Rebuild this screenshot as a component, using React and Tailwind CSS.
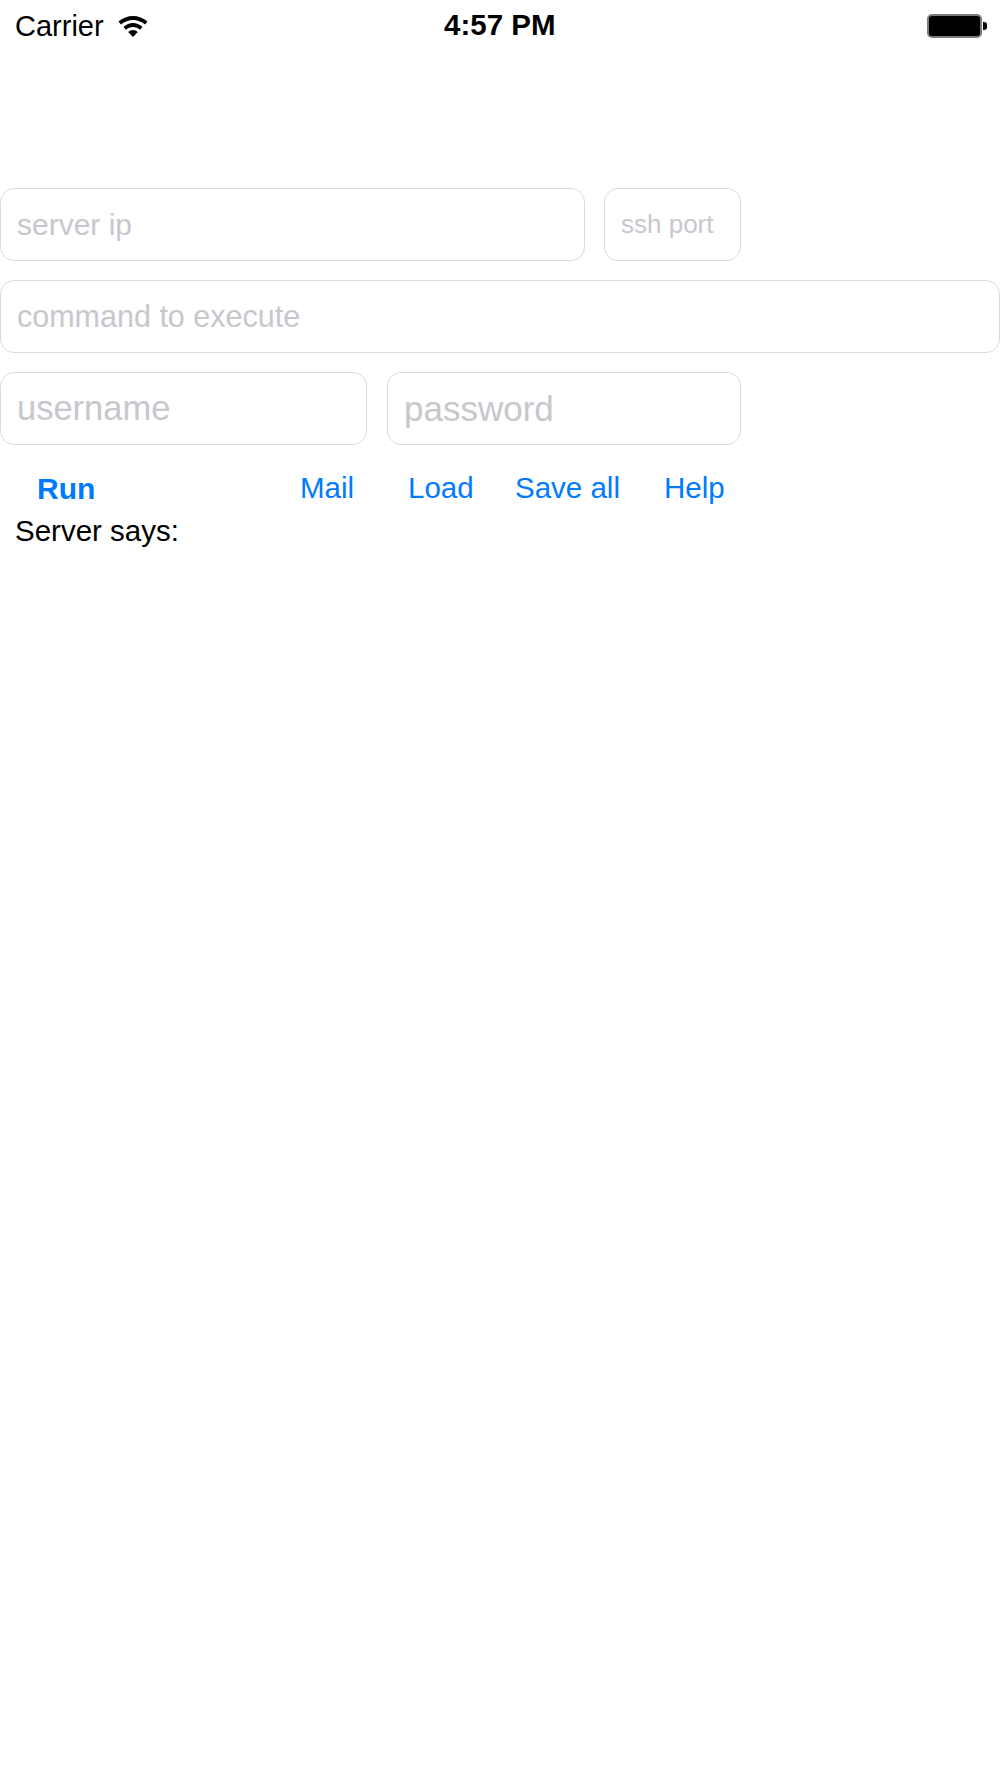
const fontStack = "font-['Liberation_Sans',Arial,sans-serif]";

function WifiIcon() {
  return (
    <svg width="30" height="24" viewBox="0 0 30 24" className="block">
      <path d="M0.5 7.5C8.5 0 21.5 0 29.5 7.5L27 10.5C20 4.5 10 4.5 3 10.5Z" fill="#000" />
      <path d="M5.5 13C11 7.5 19 7.5 24.5 13L22 15.8C18 12 12 12 8 15.8Z" fill="#000" />
      <path d="M10.2 18C13 15.2 17 15.2 19.8 18L15 23Z" fill="#000" />
    </svg>
  );
}

function BatteryIcon() {
  return (
    <div className="flex items-center gap-[1px]">
      <div className="w-[55px] h-[24px] rounded-[5px] border-2 border-[#7b7b7b] bg-black" />
      <div className="w-[4px] h-[8px] rounded-r-[3px] bg-black" />
    </div>
  );
}

function Field({ placeholder, className, size }) {
  return (
    <input
      placeholder={placeholder}
      className={`h-[73px] rounded-[14px] border border-[#d9d9d9] bg-white px-[16px] outline-none placeholder:text-[#c7c7cd] ${size} ${className}`}
    />
  );
}

export default function App() {
  return (
    <div className={`w-[1000px] h-[1778px] bg-white text-black ${fontStack}`}>
      <div className="relative h-[51px] flex items-center justify-between pl-[15px] pr-[13px]">
        <div className="flex items-center gap-[14px] text-[29px]">
          <span className="pt-[2px]">Carrier</span>
          <WifiIcon />
        </div>
        <span className="text-[29.5px] font-bold absolute left-[444px]">4:57 PM</span>
        <BatteryIcon />
      </div>

      <div className="pt-[137px] flex flex-col gap-[19px]">
        <div className="flex gap-[19px]">
          <Field placeholder="server ip" className="w-[585px]" size="text-[30px]" />
          <Field placeholder="ssh port" className="w-[137px]" size="text-[26px]" />
        </div>
        <Field placeholder="command to execute" className="w-[1000px]" size="text-[30.5px]" />
        <div className="flex gap-[20px]">
          <Field placeholder="username" className="w-[367px]" size="text-[34.5px]" />
          <Field placeholder="password" className="w-[354px]" size="text-[35px]" />
        </div>
      </div>

      <div className="mt-[25px] flex items-start h-[39px] text-[#007aff] text-[29.5px]">
        <button className="ml-[37px] w-[263px] text-left text-[30px] font-bold leading-[37px]">Run</button>
        <button className="w-[108px] text-left leading-[35px]">Mail</button>
        <button className="w-[107px] text-left leading-[35px]">Load</button>
        <button className="w-[149px] text-left leading-[35px]">Save all</button>
        <button className="text-left leading-[35px]">Help</button>
      </div>

      <div className="pl-[15px] mt-[6px] text-[29.5px] leading-[32px]">Server says:</div>
    </div>
  );
}
